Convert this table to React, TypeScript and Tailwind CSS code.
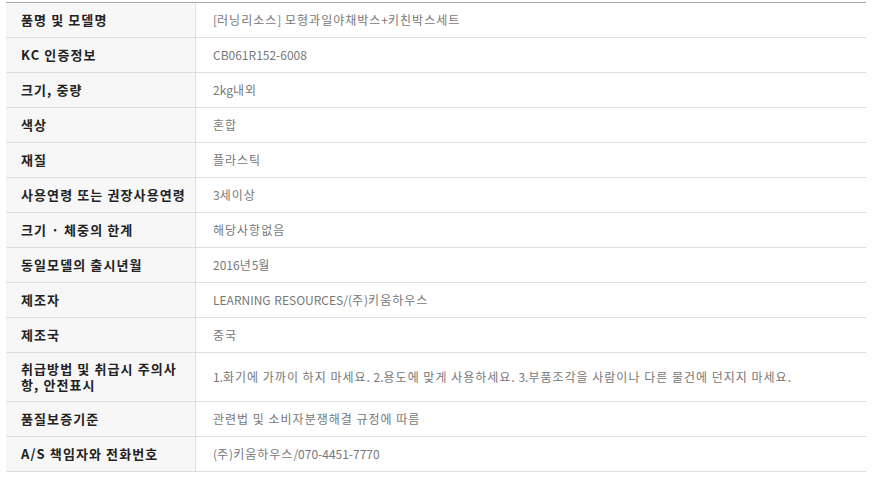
import React from "react";

const rows: { label: string[]; value: string; tall?: boolean }[] = [
  { label: ["품명 및 모델명"], value: "[러닝리소스] 모형과일야채박스+키친박스세트" },
  { label: ["KC 인증정보"], value: "CB061R152-6008" },
  { label: ["크기, 중량"], value: "2kg내외" },
  { label: ["색상"], value: "혼합" },
  { label: ["재질"], value: "플라스틱" },
  { label: ["사용연령 또는 권장사용연령"], value: "3세이상" },
  { label: ["크기 · 체중의 한계"], value: "해당사항없음" },
  { label: ["동일모델의 출시년월"], value: "2016년5월" },
  { label: ["제조자"], value: "LEARNING RESOURCES/(주)키움하우스" },
  { label: ["제조국"], value: "중국" },
  {
    label: ["취급방법 및 취급시 주의사", "항, 안전표시"],
    value:
      "1.화기에 가까이 하지 마세요. 2.용도에 맞게 사용하세요. 3.부품조각을 사람이나 다른 물건에 던지지 마세요.",
    tall: true,
  },
  { label: ["품질보증기준"], value: "관련법 및 소비자분쟁해결 규정에 따름" },
  { label: ["A/S 책임자와 전화번호"], value: "(주)키움하우스/070-4451-7770" },
];

function Mixed({ text }: { text: string }) {
  const parts = text.split(/([\uAC00-\uD7A3 ]+)/).filter((p) => p.length > 0);
  return (
    <>
      {parts.map((p, i) =>
        /[\uAC00-\uD7A3 ]/.test(p[0]) ? (
          <span key={i} className="tracking-[1px]">
            {p}
          </span>
        ) : (
          <span key={i} className="tracking-[0px]">
            {p}
          </span>
        )
      )}
    </>
  );
}

export default function App() {
  return (
    <div
      className="w-[880px] h-[482px] bg-white pt-[2px] pl-[6px]"
      style={{ fontFamily: '"Noto Sans CJK KR", "Noto Sans", sans-serif' }}
    >
      <div className="w-[860px] border-t border-[#aaaaaa]">
        {rows.map((r, i) => (
          <div
            key={i}
            className={`flex border-b border-[#dddddd] ${r.tall ? "h-[49px]" : "h-[35px]"}`}
          >
            <div className="w-[190px] shrink-0 bg-[#f7f7f7] border-r border-[#e3e3e3] flex flex-col justify-center pl-[15px] pb-[1px]">
              {r.label.map((l, j) => (
                <div
                  key={j}
                  className="text-[13px] leading-[16px] font-bold text-[#222222] tracking-[1.1px] whitespace-nowrap"
                >
                  {l}
                </div>
              ))}
            </div>
            <div className="flex-1 flex items-center pl-[17px] pb-[1px]">
              <span className="text-[12px] leading-[15px] text-[#777777] whitespace-nowrap">
                <Mixed text={r.value} />
              </span>
            </div>
          </div>
        ))}
      </div>
    </div>
  );
}
